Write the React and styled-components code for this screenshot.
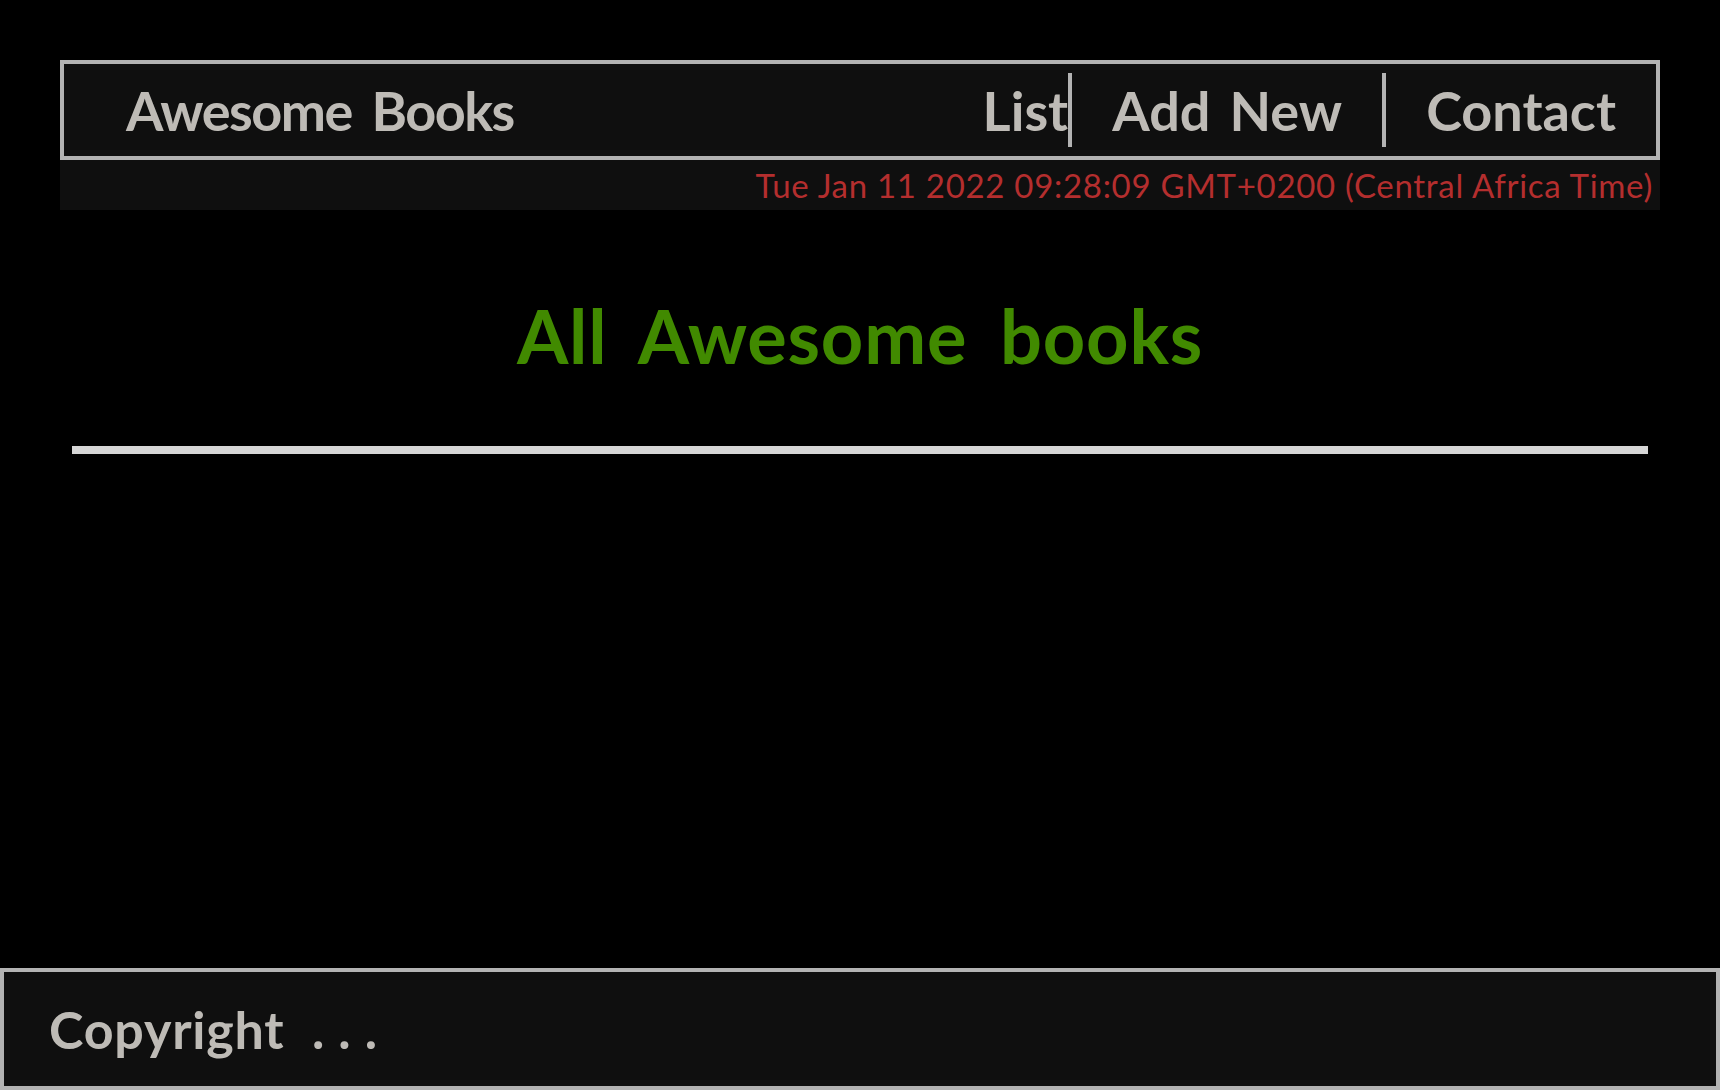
import React from "react";
import styled, { createGlobalStyle } from "styled-components";

const GlobalStyle = createGlobalStyle`
  html, body {
    margin: 0;
    padding: 0;
    background: #000;
  }
  body {
    font-family: "Comic Sans MS", "Lato", "Liberation Sans", sans-serif;
  }
  * {
    box-sizing: border-box;
  }
`;

export default function App() {
  return (
    <>
      <GlobalStyle />
      <Page>
        <Header>
          <Nav>
            <Logo>Awesome Books</Logo>
            <ListNav>
              {links.map((l, i) => (
                <NavItem key={l.id} first={i === 0}>
                  {l.name}
                </NavItem>
              ))}
            </ListNav>
          </Nav>
          <DateBar>Tue Jan 11 2022 09:28:09 GMT+0200 (Central Africa Time)</DateBar>
        </Header>
        <Main>
          <Title>All Awesome books</Title>
          <Rule />
        </Main>
        <Footer>
          <FooterText>
            Copyright <Dots>...</Dots>
          </FooterText>
        </Footer>
      </Page>
    </>
  );
}

const Page = styled.div`
  min-height: 100vh;
  display: flex;
  flex-direction: column;
`;

const Header = styled.header`
  margin: 60px 60px 0;
`;

const Nav = styled.nav`
  height: 100px;
  border: 4px solid #b3b3b3;
  background: #0f0f0f;
  display: flex;
  align-items: center;
  justify-content: space-between;
  padding-left: 62px;
`;

const Logo = styled.h1`
  margin: 0;
  font-size: 54px;
  font-weight: 700;
  color: #bebbb6;
  letter-spacing: -1.5px;
  word-spacing: 8px;
`;

const ListNav = styled.ul`
  list-style: none;
  margin: 0;
  padding: 0;
  display: flex;
  align-items: center;
`;

const NavItem = styled.li`
  height: 74px;
  display: flex;
  align-items: center;
  padding: 0 40px;
  padding-right: ${(p) => (p.first ? "0" : "40px")};
  border-left: ${(p) => (p.first ? "none" : "4px solid #b3b3b3")};
  font-size: 54px;
  font-weight: 700;
  color: #bebbb6;
  cursor: pointer;
  word-spacing: 6px;
`;

const DateBar = styled.div`
  height: 50px;
  background: #0f0f0f;
  display: flex;
  align-items: center;
  justify-content: flex-end;
  padding-right: 7px;
  font-size: 33px;
  letter-spacing: 0.7px;
  color: #b42e2e;
`;

const Main = styled.main`
  padding: 0 72px;
`;

const Title = styled.h2`
  margin: 81px 0 0;
  text-align: center;
  font-size: 74px;
  font-weight: 700;
  line-height: 90px;
  color: #418a00;
  letter-spacing: 0.8px;
  word-spacing: 14px;
`;

const Rule = styled.hr`
  margin: 65px 0 0;
  height: 8px;
  border: none;
  background: #d6d6d6;
`;

const Footer = styled.footer`
  margin-top: auto;
  height: 122px;
  border: 4px solid #b3b3b3;
  background: #0f0f0f;
  display: flex;
  align-items: center;
  padding-left: 45px;
`;

const FooterText = styled.p`
  margin: 0;
  font-size: 52px;
  font-weight: 700;
  color: #bebbb6;
  letter-spacing: 0.8px;
  word-spacing: 14px;
`;

const Dots = styled.span`
  letter-spacing: 14px;
`;

const links = [
  { id: 1, name: "List" },
  { id: 2, name: "Add New" },
  { id: 3, name: "Contact" },
];
